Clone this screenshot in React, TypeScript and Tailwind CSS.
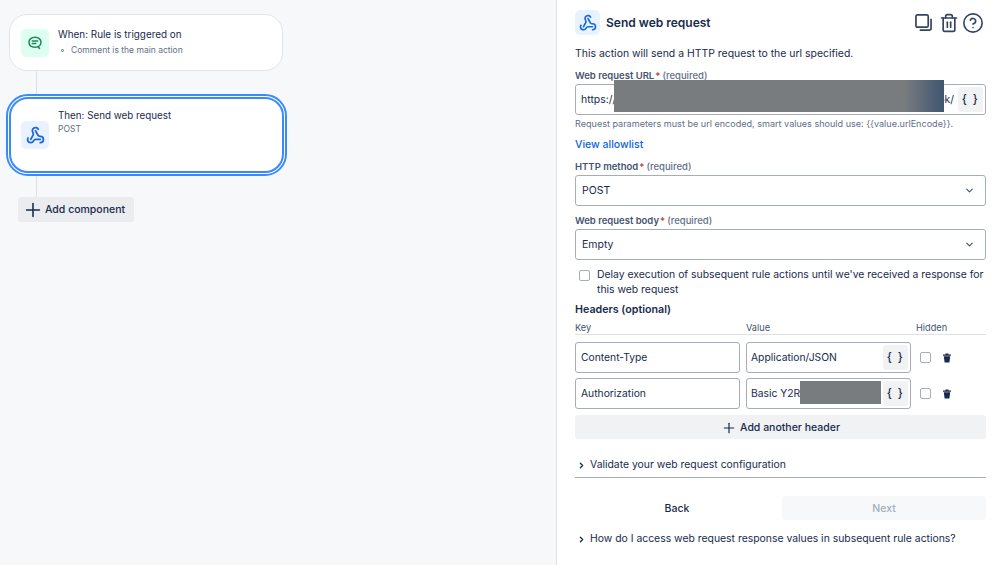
import React from 'react';
import { ChevronDown, ChevronRight, CircleHelp, Plus, Trash2, Webhook } from 'lucide-react';

const Label = ({ text }: { text: string }) => (
  <div className="h-[12px] text-[9.5px] leading-[12px] font-semibold text-[#44546f]">
    {text}
    <span className="text-[#c9372c] ml-px">*</span>
    <span className="text-[#626f86] ml-[2px] font-medium">(required)</span>
  </div>
);

const Braces = () => (
  <div className="w-[25px] h-[25px] rounded-[3px] bg-[#f1f2f4] flex items-center justify-center text-[11.5px] font-medium text-[#172b4d] shrink-0 tracking-[1.5px]">
    {'{ }'}
  </div>
);

const SelectBox = ({ value }: { value: string }) => (
  <div className="h-[31px] mt-[2px] border border-[#a5adba] rounded-[3px] bg-white flex items-center justify-between pl-[6px] pr-[10px] text-[10.5px] text-[#172b4d]">
    <span>{value}</span>
    <ChevronDown size={11} strokeWidth={2.5} className="text-[#44546f]" />
  </div>
);

const TextBox = ({ value, className }: { value: string; className: string }) => (
  <div className={`h-[31px] border border-[#a5adba] rounded-[3px] bg-white flex items-center pl-[5px] text-[10.3px] text-[#172b4d] ${className}`}>
    {value}
  </div>
);

const SmallTrash = () => (
  <svg width="10" height="10" viewBox="0 0 10 10" className="text-[#172b4d]">
    <path d="M1 1.5h8v1.2H1z M1.8 3.2h6.4L7.4 9.5H2.6z M3.5 0.6h3v1h-3z" fill="currentColor" />
  </svg>
);

const Checkbox = () => (
  <div className="w-[11px] h-[11px] rounded-[2px] border border-[#a5adba] bg-white shrink-0" />
);

const HeaderRow = ({ name, value, secret }: { name: string; value: string; secret?: boolean }) => (
  <div className="flex items-center h-[31px]">
    <TextBox value={name} className="w-[165px]" />
    <div className="relative ml-[6px] w-[165px] h-[31px] border border-[#a5adba] rounded-[3px] bg-white flex items-center justify-between pl-[4px] pr-[2px] text-[10.3px] text-[#172b4d]">
      <span>{value}</span>
      <Braces />
      {secret && <div className="absolute left-[53px] top-[2px] w-[81px] h-[23px] bg-[#797c7e]" />}
    </div>
    <div className="ml-[9px] flex items-center gap-[11px]">
      <Checkbox />
      <SmallTrash />
    </div>
  </div>
);

const Disclosure = ({ text }: { text: string }) => (
  <div className="flex items-center pt-px text-[10.4px] leading-[14px] text-[#172b4d] whitespace-nowrap">
    <ChevronRight size={9} strokeWidth={3.5} className="ml-[2px] mr-[4px] shrink-0" />
    {text}
  </div>
);

export default function App() {
  return (
    <div className="w-[998px] h-[565px] overflow-hidden flex bg-white text-[#172b4d] font-['Inter',sans-serif]">
      <div className="w-[557px] h-full bg-[#f7f8f9] border-r border-[#dfe1e6] shrink-0 pt-[14px]">
        <div className="ml-[9px] w-[274px] h-[57px] rounded-[18px] bg-white border border-[#e2e4e8] flex items-start pl-[11px] pt-[14px]">
          <div className="w-[28px] h-[28px] rounded-[5px] bg-[#dcfff1] flex items-center justify-center">
            <svg width="16" height="16" viewBox="0 0 16 16" fill="none" stroke="#1f845a" strokeWidth="1.5" strokeLinecap="round">
              <path d="M8 2.2c3.4 0 6 2.2 6 5s-2.4 5-5.8 5c-.8 0-1.5-.1-2.200-.3C3.400 11.400 2 9.500 2 7.200 2 4.400 4.600 2.200 8 2.200z" />
              <path d="M5.300 6h5.400M5.300 8.500h3.500M11 11.500l1.500 2" />
            </svg>
          </div>
          <div className="ml-[9px] -mt-[2px]">
            <div className="text-[9.9px] leading-[14px] text-[#172b4d]">When: Rule is triggered on</div>
            <div className="flex items-center mt-[3px] text-[8.500px] leading-[12px] text-[#626f86]">
              <span className="w-[3px] h-[3px] rounded-full border border-[#626f86] ml-[3px] mr-[7px]" />
              Comment is the main action
            </div>
          </div>
        </div>
        <div className="ml-[36px] w-px h-[23px] bg-[#dcdfe4]" />
        <div className="ml-[6px] w-[281px] h-[82px] rounded-[22px] bg-white border-[5px] border-double border-[#388bff] flex items-start pl-[10px] pt-[22px]">
          <div className="w-[28px] h-[28px] rounded-[5px] bg-[#e9f2ff] flex items-center justify-center">
            <Webhook size={19} strokeWidth={2.2} className="text-[#1868db]" />
          </div>
          <div className="ml-[9px] -mt-[12px]">
            <div className="text-[9.8px] leading-[14px] text-[#172b4d]">Then: Send web request</div>
            <div className="text-[8.500px] leading-[13px] text-[#626f86]">POST</div>
          </div>
        </div>
        <div className="ml-[36px] w-px h-[21px] bg-[#dcdfe4]" />
        <div className="ml-[18px] w-[116px] h-[25px] rounded-[3px] bg-[#ebecf0] flex items-center pl-[4px] text-[10.5px] font-medium text-[#172b4d]">
          <Plus size={22} strokeWidth={1.7} className="mr-[1px]" />
          Add component
        </div>
      </div>

      <div className="flex-1 pl-[18px] pr-[12px] pt-[10px]">
        <div className="flex items-center h-[25px]">
          <div className="w-[25px] h-[25px] rounded-[5px] bg-[#e9f2ff] flex items-center justify-center">
            <Webhook size={18} strokeWidth={2.2} className="text-[#1868db]" />
          </div>
          <div className="ml-[6px] pt-[1px] text-[12px] font-semibold text-[#172b4d]">Send web request</div>
          <div className="ml-auto mr-[2px] flex items-center text-[#344563]">
            <svg width="17" height="17" viewBox="0 0 18 18" fill="none" stroke="currentColor" strokeWidth="1.8" className="mr-[7px]">
              <rect x="1" y="1" width="13" height="13" rx="1.500" />
              <path d="M17 5v10a2 2 0 0 1-2 2H5" />
            </svg>
            <Trash2 size={20} strokeWidth={2} className="mr-[3px]" />
            <CircleHelp size={22} strokeWidth={1.8} />
          </div>
        </div>

        <div className="mt-[12px] text-[10.45px] leading-[14px] text-[#172b4d]">This action will send a HTTP request to the url specified.</div>

        <div className="mt-[9px]"><Label text="Web request URL" /></div>
        <div className="relative mt-[2px] h-[31px] border border-[#a5adba] rounded-[3px] bg-white flex items-center justify-between pl-[5px] pr-[2px] text-[10.5px] text-[#172b4d]">
          <span>https://</span>
          <div className="flex items-center gap-[4px]">
            <span>ok/</span>
            <Braces />
          </div>
          <div className="absolute left-[38px] -top-[5px] w-[330px] h-[32px] bg-gradient-to-r from-[#797c7e] from-[88%] to-[#3f5570]" />
        </div>
        <div className="mt-[3px] h-[12px] text-[9.07px] leading-[12px] text-[#626f86] whitespace-nowrap">Request parameters must be url encoded, smart values should use: {'{{value.urlEncode}}'}.</div>
        <div className="mt-[8px] h-[14px] text-[10.500px] leading-[14px] font-medium text-[#0c66e4]">View allowlist</div>

        <div className="mt-[9px]"><Label text="HTTP method" /></div>
        <SelectBox value="POST" />
        <div className="mt-[9px]"><Label text="Web request body" /></div>
        <SelectBox value="Empty" />

        <div className="flex items-start mt-[7px]">
          <div className="ml-[4px] mt-[3px]"><Checkbox /></div>
          <div className="ml-[7px] text-[10.4px] leading-[15px] text-[#172b4d]">Delay execution of subsequent rule actions until we've received a response for this web request</div>
        </div>

        <div className="mt-[6px] h-[14px] text-[10.7px] leading-[14px] font-semibold text-[#172b4d]">Headers (optional)</div>
        <div className="mt-[5px] h-[13px] flex text-[9.2px] leading-[12px] text-[#44546f] border-b border-[#dfe1e6]">
          <span className="w-[171px]">Key</span>
          <span className="w-[170px]">Value</span>
          <span>Hidden</span>
        </div>
        <div className="mt-[7px] flex flex-col gap-[5px]">
          <HeaderRow name="Content-Type" value="Application/JSON" />
          <HeaderRow name="Authorization" value="Basic Y2R" secret />
        </div>
        <div className="mt-[6px] h-[24px] pt-px rounded-[3px] bg-[#f1f2f4] flex items-center justify-center text-[10.5px] font-medium text-[#172b4d]">
          <Plus size={16} strokeWidth={1.8} className="mr-[3px]" />
          Add another header
        </div>

        <div className="mt-[18px]"><Disclosure text="Validate your web request configuration" /></div>
        <div className="mt-[5px] h-px bg-[#a5adba]" />
        <div className="mt-[18px] flex gap-[3px] text-[10.5px] font-medium">
          <div className="flex-1 h-[24px] pt-px flex items-center justify-center text-[#172b4d]">Back</div>
          <div className="w-[204px] h-[24px] pt-px rounded-[3px] bg-[#f7f8f9] flex items-center justify-center text-[#a5adba]">Next</div>
        </div>
        <div className="mt-[11px]"><Disclosure text="How do I access web request response values in subsequent rule actions?" /></div>
      </div>
    </div>
  );
}
